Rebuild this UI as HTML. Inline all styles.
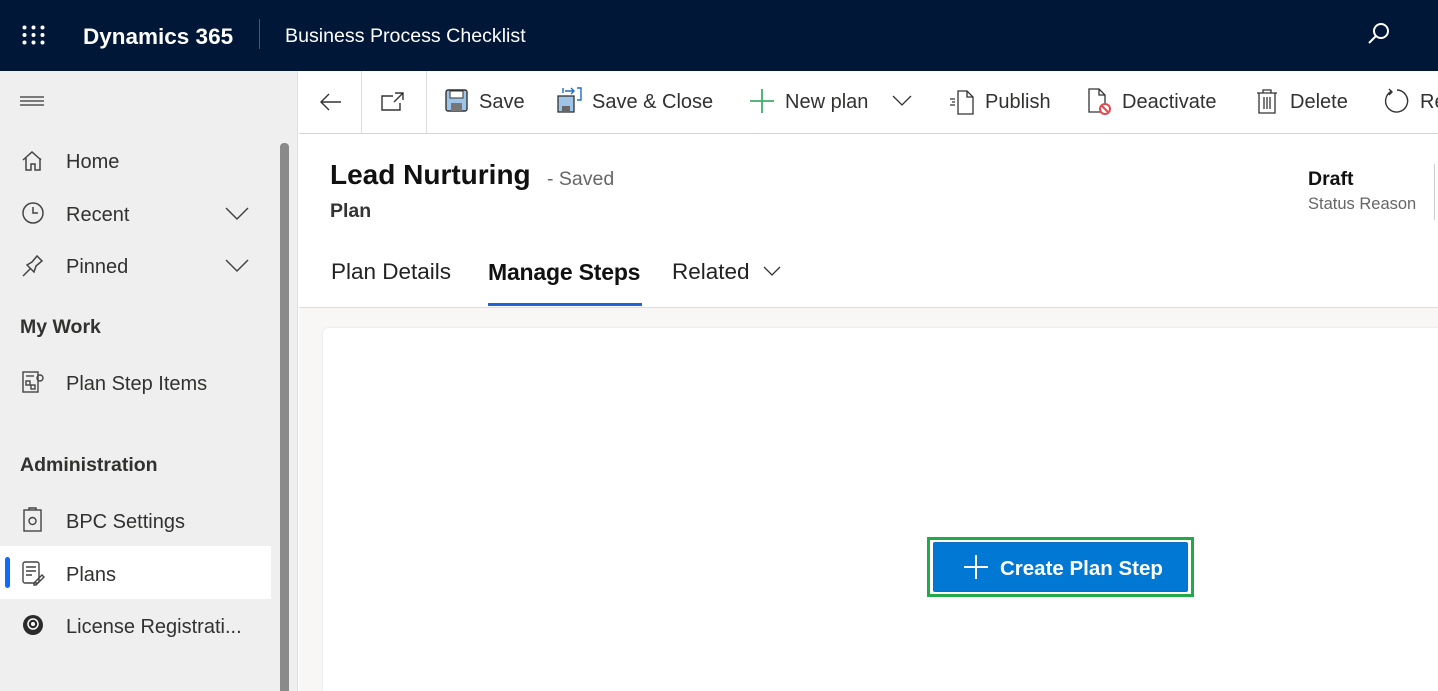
<!DOCTYPE html>
<html><head><meta charset="utf-8"><style>
*{margin:0;padding:0;box-sizing:border-box}
html,body{width:1438px;height:691px;overflow:hidden}
body{font-family:"Liberation Sans",sans-serif;background:#fff;position:relative;color:#323130}
.a{position:absolute;white-space:nowrap}
#hdr{left:0;top:0;width:1438px;height:71px;background:#001738}
#side{left:0;top:71px;width:298px;height:620px;background:#efefef;border-right:1px solid #e0e0e0}
.si{font-size:20px;color:#323130}
.sh{font-size:19.5px;font-weight:bold;color:#323130}
.tb{font-size:20px;color:#323130}
svg{position:absolute}
</style></head><body>
<div id="hdr" class="a"></div>
<svg style="left:22px;top:25px" width="24" height="20" viewBox="0 0 24 20" fill="#fff"><circle cx="2.5" cy="2.5" r="2"/><circle cx="11.5" cy="2.5" r="2"/><circle cx="20.5" cy="2.5" r="2"/><circle cx="2.5" cy="10" r="2"/><circle cx="11.5" cy="10" r="2"/><circle cx="20.5" cy="10" r="2"/><circle cx="2.5" cy="17.5" r="2"/><circle cx="11.5" cy="17.5" r="2"/><circle cx="20.5" cy="17.5" r="2"/></svg>
<div class="a" style="left:83px;top:24px;font-size:22.5px;font-weight:bold;color:#fff">Dynamics 365</div>
<div class="a" style="left:259px;top:19px;width:1px;height:30px;background:#555"></div>
<div class="a" style="left:285px;top:25px;font-size:19.6px;color:#fff">Business Process Checklist</div>
<svg style="left:1366px;top:21px" width="26" height="26" viewBox="0 0 26 26" fill="none" stroke="#fff" stroke-width="2"><circle cx="15" cy="10" r="7"/><path d="M10 15L3 22"/></svg>

<div id="side" class="a"></div>
<svg style="left:20px;top:96px" width="24" height="12"><path d="M0 1h24M0 5h24M0 9h24" stroke="#333" stroke-width="1.3"/></svg>
<div class="a" style="left:280px;top:143px;width:9px;height:548px;background:#8a8a8a;border-radius:4px 4px 0 0"></div>
<svg style="left:21px;top:150px" width="24" height="22" fill="none" stroke="#444" stroke-width="1.5"><path d="M2 10L11 2l9 8M5 8v12h5v-6h4v6h5V8"/></svg>
<div class="a si" style="left:66px;top:151px">Home</div>
<svg style="left:21px;top:202px" width="24" height="24" fill="none" stroke="#444" stroke-width="1.5"><circle cx="12" cy="11" r="10"/><path d="M12 5v6h5"/></svg>
<div class="a si" style="left:66px;top:204px">Recent</div>
<svg style="left:225px;top:207px" width="24" height="14" fill="none" stroke="#444" stroke-width="1.5"><path d="M1 1l11 11L23 1"/></svg>
<svg style="left:21px;top:254px" width="24" height="24" fill="none" stroke="#444" stroke-width="1.5"><path d="M2 22l7-7M6 11l7 7 2-6 6-5-5-5-5 6z"/></svg>
<div class="a si" style="left:66px;top:256px">Pinned</div>
<svg style="left:225px;top:259px" width="24" height="14" fill="none" stroke="#444" stroke-width="1.5"><path d="M1 1l11 11L23 1"/></svg>
<div class="a sh" style="left:20px;top:316px">My Work</div>
<svg style="left:21px;top:370px" width="24" height="24" fill="none" stroke="#444" stroke-width="1.4"><rect x="2" y="2" width="15" height="20"/><rect x="5" y="11" width="4" height="4"/><rect x="10" y="15" width="4" height="4"/><path d="M5 6h8"/><circle cx="19" cy="8" r="3"/></svg>
<div class="a si" style="left:66px;top:373px">Plan Step Items</div>
<div class="a sh" style="left:20px;top:454px">Administration</div>
<svg style="left:21px;top:507px" width="24" height="26" fill="none" stroke="#444" stroke-width="1.4"><rect x="3" y="3" width="17" height="21"/><path d="M8 3V1h7v2"/><circle cx="11.5" cy="14" r="3.5"/></svg>
<div class="a si" style="left:66px;top:511px">BPC Settings</div>
<div class="a" style="left:0;top:546px;width:271px;height:53px;background:#fff"></div>
<div class="a" style="left:5px;top:557px;width:5px;height:31px;background:#0f6cf5;border-radius:3px"></div>
<svg style="left:21px;top:560px" width="24" height="26" fill="none" stroke="#444" stroke-width="1.4"><rect x="2" y="2" width="16" height="21" rx="2"/><path d="M5 7h10M5 11h10M5 15h6M13 23l8-8 2 2-8 8h-2z"/></svg>
<div class="a si" style="left:66px;top:564px">Plans</div>
<svg style="left:21px;top:613px" width="24" height="24"><circle cx="12" cy="12" r="10" fill="#2b2b2b"/><circle cx="12" cy="11" r="5" fill="none" stroke="#fff" stroke-width="1.5"/><circle cx="12" cy="11" r="2" fill="#fff"/></svg>
<div class="a si" style="left:66px;top:616px">License Registrati...</div>

<div class="a" style="left:299px;top:133px;width:1139px;height:1px;background:#d6d6d6"></div>
<div class="a" style="left:361px;top:71px;width:1px;height:62px;background:#ddd"></div>
<div class="a" style="left:426px;top:71px;width:1px;height:62px;background:#ddd"></div>
<svg style="left:319px;top:92px" width="24" height="20" fill="none" stroke="#333" stroke-width="1.4"><path d="M22 10H2M10 2L2 10l8 8"/></svg>
<svg style="left:381px;top:92px" width="24" height="20" fill="none" stroke="#333" stroke-width="1.4"><path d="M12 4H1v14h18v-7M14 1h8v7M22 1l-9 9"/></svg>
<svg style="left:445px;top:89px" width="23" height="23"><rect x="1" y="1" width="21" height="21" rx="2" fill="#9ec5e8" stroke="#333" stroke-width="1.4"/><rect x="5" y="2" width="13" height="7" fill="#fff" stroke="#333"/><rect x="6" y="14" width="11" height="8" fill="#777"/></svg>
<div class="a tb" style="left:479px;top:91px">Save</div>
<svg style="left:557px;top:87px" width="26" height="26"><rect x="1" y="9" width="16" height="16" fill="#9ec5e8" stroke="#333" stroke-width="1.3"/><rect x="5" y="19" width="8" height="6" fill="#666"/><path d="M6 6V1M20 1h4v12h-4M8 4h9M14 1l3 3-3 3" fill="none" stroke="#1f6fc4" stroke-width="1.4"/></svg>
<div class="a tb" style="left:592px;top:91px">Save &amp; Close</div>
<svg style="left:750px;top:89px" width="24" height="24"><path d="M12 0v24M0 12h24" stroke="#3fae6a" stroke-width="1.8"/></svg>
<div class="a tb" style="left:785px;top:91px">New plan</div>
<svg style="left:892px;top:95px" width="20" height="12" fill="none" stroke="#333" stroke-width="1.3"><path d="M1 1l9 9 9-9"/></svg>
<svg style="left:949px;top:89px" width="26" height="26" fill="none" stroke="#333" stroke-width="1.3"><path d="M9 2h9l6 6v17H9zM18 2v6h6M1 10h5M3 13h3M1 16h5"/></svg>
<div class="a tb" style="left:985px;top:91px">Publish</div>
<svg style="left:1087px;top:87px" width="26" height="28"><path d="M2 2h10l6 6v17H2zM12 2v6h6" fill="none" stroke="#333" stroke-width="1.3"/><circle cx="18" cy="22" r="5" fill="#fff" stroke="#e5484d" stroke-width="2"/><path d="M15 19l6 6" stroke="#e5484d" stroke-width="2"/></svg>
<div class="a tb" style="left:1122px;top:91px">Deactivate</div>
<svg style="left:1256px;top:88px" width="22" height="27" fill="none" stroke="#333" stroke-width="1.3"><path d="M1 5h20M7 5V2h8v3M3 5v20h16V5M8 9v12M11 9v12M14 9v12"/></svg>
<div class="a tb" style="left:1290px;top:91px">Delete</div>
<svg style="left:1384px;top:88px" width="26" height="27" fill="none" stroke="#333" stroke-width="1.4"><path d="M8 3A11 11 0 1 0 13 2M5 1l3 3-3 3"/></svg>
<div class="a tb" style="left:1420px;top:91px">Re</div>

<div class="a" style="left:330px;top:159px;font-size:28px;font-weight:bold;color:#111">Lead Nurturing</div>
<div class="a" style="left:547px;top:168px;font-size:19.5px;color:#666">- Saved</div>
<div class="a" style="left:330px;top:200px;font-size:19.5px;font-weight:bold;color:#333">Plan</div>
<div class="a" style="left:1308px;top:168px;font-size:19.5px;font-weight:bold;color:#111">Draft</div>
<div class="a" style="left:1308px;top:195px;font-size:16.5px;color:#666">Status Reason</div>
<div class="a" style="left:1434px;top:164px;width:1px;height:56px;background:#ccc"></div>
<div class="a" style="left:331px;top:259px;font-size:22.5px;color:#222">Plan Details</div>
<div class="a" style="left:488px;top:259px;font-size:23px;font-weight:bold;color:#111;letter-spacing:-0.2px">Manage Steps</div>
<div class="a" style="left:488px;top:303px;width:154px;height:3px;background:#1e64d8"></div>
<div class="a" style="left:672px;top:259px;font-size:22.5px;color:#222">Related</div>
<svg style="left:763px;top:266px" width="18" height="11" fill="none" stroke="#333" stroke-width="1.3"><path d="M1 1l8 8 8-8"/></svg>

<div class="a" style="left:299px;top:307px;width:1139px;height:384px;background:#f8f7f6;border-top:1px solid #ddd"></div>
<div class="a" style="left:323px;top:328px;width:1130px;height:363px;background:#fff;border-radius:6px 6px 0 0;box-shadow:0 0 2px rgba(0,0,0,0.12)"></div>
<div class="a" style="left:927px;top:537px;width:267px;height:60px;border:3px solid #22aa48;background:#fff"></div>
<div class="a" style="left:933px;top:542px;width:255px;height:50px;background:#0078d4;border-radius:2px;border:1px solid #106ebe"></div>
<svg style="left:964px;top:555px" width="24" height="24"><path d="M12 0v24M0 12h24" stroke="#fff" stroke-width="2"/></svg>
<div class="a" style="left:1000px;top:557px;font-size:20.5px;font-weight:bold;color:#fff">Create Plan Step</div>
</body></html>
